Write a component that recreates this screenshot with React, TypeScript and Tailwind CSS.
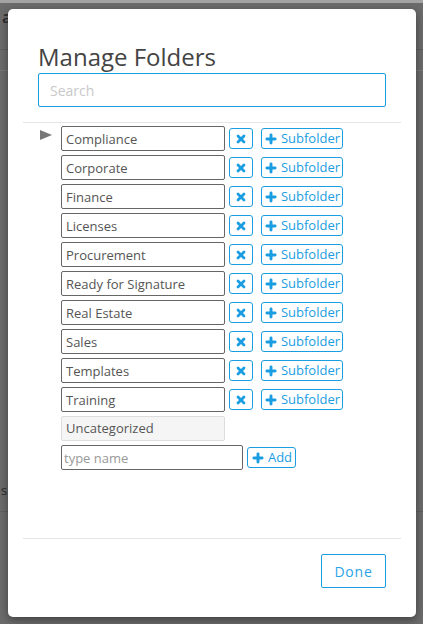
import { Plus, X } from 'lucide-react';

const folders = [
  'Compliance',
  'Corporate',
  'Finance',
  'Licenses',
  'Procurement',
  'Ready for Signature',
  'Real Estate',
  'Sales',
  'Templates',
  'Training',
];

function FolderRow({ name, first }: { name: string; first?: boolean }) {
  return (
    <div className="relative flex h-[25px] items-center">
      {first && (
        <svg className="absolute left-[-21px] top-[4px]" width="12" height="10" viewBox="0 0 12 10">
          <path d="M0 0 L12 5 L0 10 Z" fill="#777" />
        </svg>
      )}
      <input
        defaultValue={name}
        className="h-[25px] w-[164px] rounded-[2px] border border-[#666] px-[4px] text-[13px] text-[#555] outline-none"
      />
      <button className="ml-[4px] flex h-[21px] w-[24px] items-center justify-center rounded-[3px] border border-[#1b9de2] text-[#1b9de2]">
        <X size={12} strokeWidth={5.5} />
      </button>
      <button className="ml-[8px] flex h-[21px] w-[82px] items-center justify-center gap-[3px] rounded-[3px] border border-[#1b9de2] text-[13px] text-[#1b9de2]">
        <Plus size={14} strokeWidth={5} />
        Subfolder
      </button>
    </div>
  );
}

export default function App() {
  return (
    <div className="relative h-[624px] w-[423px] overflow-hidden bg-[#6b6b6b] font-['Open_Sans',sans-serif]">
      {/* page behind the overlay */}
      <div className="h-[3px] bg-[#a3a3a3]" />
      <div className="h-[47px] border-b border-[#5e5e5e] px-[2px] pt-[1px] text-[17px] font-semibold text-[#2a2a2a]">ac</div>
      <div className="h-[21px] border-b border-[#777]" />
      <div className="mt-[405px] h-[36px] border-b border-[#5e5e5e] pl-[1px] pt-[5px] text-[13px] text-[#2a2a2a]">s</div>

      <div className="absolute left-[8px] top-[9px] flex h-[608px] w-[408px] flex-col rounded-[5px] bg-white shadow-[0_3px_9px_rgba(0,0,0,0.4)]">
        <div className="px-[30px] pt-[31px]">
          <h2 className="text-[24px] leading-[33px] text-[#444]">Manage Folders</h2>
          <input
            placeholder="Search"
            className="h-[34px] w-full rounded-[2px] border border-[#1b9de2] px-[11px] text-[14px] text-[#555] outline-none placeholder:text-[#c8c8c8]"
          />
        </div>
        <div className="mx-[15px] mt-[15px] border-t border-[#e5e5e5]" />
        <div className="flex flex-1 flex-col gap-[4px] pl-[53px] pt-[3px]">
          {folders.map((f, i) => (
            <FolderRow key={f} name={f} first={i === 0} />
          ))}
          <div className="flex h-[25px] w-[164px] items-center rounded-[2px] border border-[#ddd] bg-[#f5f5f5] px-[4px] text-[13px] text-[#555]">
            Uncategorized
          </div>
          <div className="flex h-[25px] items-center">
            <input
              placeholder="type name"
              className="h-[25px] w-[182px] rounded-[2px] border border-[#666] px-[2px] text-[13px] text-[#555] outline-none placeholder:text-[#999]"
            />
            <button className="ml-[4px] flex h-[21px] w-[49px] items-center justify-center gap-[3px] rounded-[3px] border border-[#1b9de2] text-[13px] text-[#1b9de2]">
              <Plus size={14} strokeWidth={5} />
              Add
            </button>
          </div>
        </div>
        <div className="mx-[15px] border-t border-[#e5e5e5]" />
        <div className="flex justify-end px-[30px] pb-[29px] pt-[15px]">
          <button className="h-[34px] w-[65px] rounded-[2px] border border-[#1b9de2] text-[14px] tracking-[0.8px] text-[#2aa3e6]">
            Done
          </button>
        </div>
      </div>
    </div>
  );
}
